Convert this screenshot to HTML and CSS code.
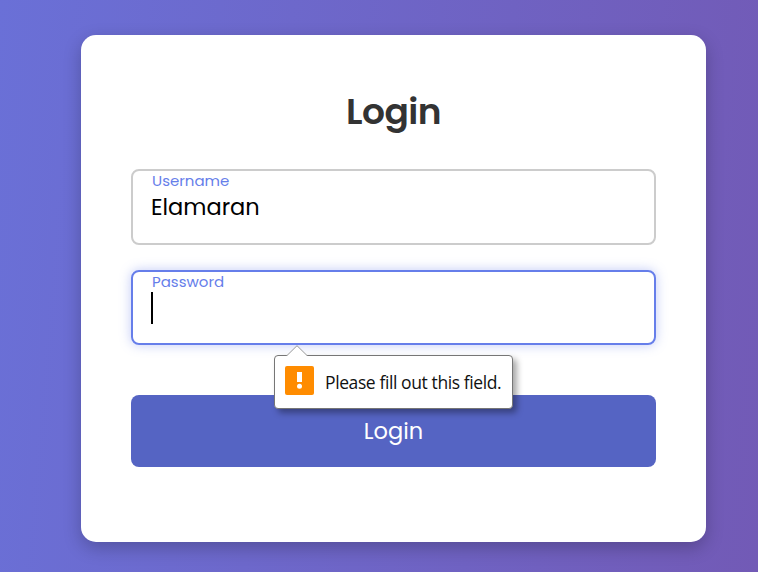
FILE: index.html
```html
<!DOCTYPE html>
<html lang="en">
<head>
<meta charset="utf-8">
<title>Login</title>
<link rel="stylesheet" href="styles.css">
</head>
<body>
<main class="card">
  <h1 class="title"><span>Login</span></h1>
  <form class="form">
    <div class="field">
      <span class="label label-user">Username</span>
      <span class="value">Elamaran</span>
    </div>
    <div class="field focused">
      <span class="label label-pass">Password</span>
      <span class="caret"></span>
      <div class="tooltip">
        <svg class="arrow" width="22" height="12" viewBox="0 0 22 12"><path d="M0 12 L1 10.5 L11 .7 L21 10.5 L22 12Z" fill="#fff"/><path d="M1 10.5 L11 .7 L21 10.5" fill="none" stroke="#999"/></svg>
        <svg class="warn" width="29" height="29" viewBox="0 0 29 29"><rect width="29" height="29" rx="2" fill="#ff8c00"/><rect x="12" y="6" width="5" height="10" fill="#fff"/><circle cx="14.5" cy="20.3" r="2.5" fill="#fff"/></svg>
        <span class="message">Please fill out this field.</span>
      </div>
    </div>
    <button class="submit" type="button"><span>Login</span></button>
  </form>
</main>
</body>
</html>
```
FILE: styles.css
```css
* { box-sizing: border-box; }
body {
  margin: 0;
  height: 572px;
  overflow: hidden;
  padding: 35px 52px 30px 81px;
  background: linear-gradient(95deg, #6a70d7, #725ab6);
  font-family: Poppins, Inter, sans-serif;
  font-feature-settings: "cv11";
}
.card {
  height: 507px;
  padding: 50px;
  border-radius: 15px;
  background: #fff;
  box-shadow: 0 6px 18px rgba(0, 0, 0, .23);
}
.title {
  margin: 0 0 30px;
  height: 54px;
  line-height: 54px;
  text-align: center;
  font-size: 36px;
  font-weight: 600;
  letter-spacing: -.5px;
  color: #333;
}
.field {
  position: relative;
  display: flex;
  flex-direction: column;
  align-items: flex-start;
  height: 76px;
  margin-bottom: 25px;
  padding-left: 18px;
  border: 2px solid #ccc;
  border-radius: 8px;
}
.focused {
  height: 75px;
  margin-bottom: 50px;
  border-color: #667eea;
  box-shadow: 0 0 12px rgba(102, 126, 234, .4);
}
.label {
  height: 20px;
  line-height: 20px;
  padding-left: 1px;
  font-size: 15px;
  color: #667eea;
}
.value {
  height: 32px;
  line-height: 32px;
  font-size: 22.5px;
  color: #000;
}
.caret {
  width: 2px;
  height: 32px;
  background: #000;
}
.tooltip {
  position: absolute;
  z-index: 1;
  left: 141px;
  top: 83px;
  display: flex;
  align-items: center;
  gap: 11px;
  width: 239px;
  height: 54px;
  padding: 0 10px 3px;
  border: 1px solid #767676;
  border-radius: 4px;
  background: #fff;
  box-shadow: 4px 4px 6px rgba(0, 0, 0, .35);
}
.arrow {
  position: absolute;
  left: 11px;
  top: -11px;
}
.warn { flex: none; }
.message {
  padding-top: 2px;
  font: 17.5px "Segoe UI", "Open Sans", sans-serif;
  white-space: nowrap;
  letter-spacing: -.4px;
  color: #111;
}
.submit {
  display: block;
  width: 100%;
  height: 72px;
  padding: 0;
  border: 0;
  border-radius: 8px;
  background: #5564c3;
  color: #fff;
  font: 22.5px Poppins, Inter, sans-serif;
}
```
